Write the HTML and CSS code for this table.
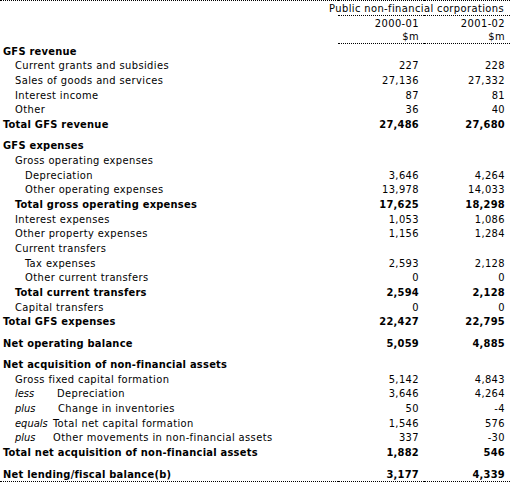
FILE: index.html
```html
<!DOCTYPE html>
<html lang="en">
<head>
    <meta charset="UTF-8">
    <title>GFS - Public non-financial corporations</title>
    <link rel="stylesheet" href="styles.css">
</head>
<body>
    <table class="gfs">
        <colgroup>
            <col class="c-label">
            <col class="c-num">
            <col class="c-num">
        </colgroup>
        <thead>
            <tr class="h1">
                <th></th>
                <th class="num under" colspan="2"><div class="span-head">Public non-financial corporations</div></th>
            </tr>
            <tr class="h2">
                <th></th>
                <th class="num">2000-01</th>
                <th class="num">2001-02</th>
            </tr>
            <tr class="h3">
                <th></th>
                <th class="num under">$m</th>
                <th class="num under">$m</th>
            </tr>
        </thead>
        <tbody>
            <tr class="b"><td>GFS revenue</td><td></td><td></td></tr>
            <tr><td class="l1">Current grants and subsidies</td><td class="num">227</td><td class="num">228</td></tr>
            <tr><td class="l1">Sales of goods and services</td><td class="num">27,136</td><td class="num">27,332</td></tr>
            <tr><td class="l1">Interest income</td><td class="num">87</td><td class="num">81</td></tr>
            <tr><td class="l1">Other</td><td class="num">36</td><td class="num">40</td></tr>
            <tr class="b"><td>Total GFS revenue</td><td class="num">27,486</td><td class="num">27,680</td></tr>
            <tr class="gap"><td colspan="3"></td></tr>

            <tr class="b"><td>GFS expenses</td><td></td><td></td></tr>
            <tr><td class="l1">Gross operating expenses</td><td></td><td></td></tr>
            <tr><td class="l2">Depreciation</td><td class="num">3,646</td><td class="num">4,264</td></tr>
            <tr><td class="l2">Other operating expenses</td><td class="num">13,978</td><td class="num">14,033</td></tr>
            <tr class="b"><td class="l1">Total gross operating expenses</td><td class="num">17,625</td><td class="num">18,298</td></tr>
            <tr><td class="l1">Interest expenses</td><td class="num">1,053</td><td class="num">1,086</td></tr>
            <tr><td class="l1">Other property expenses</td><td class="num">1,156</td><td class="num">1,284</td></tr>
            <tr><td class="l1">Current transfers</td><td></td><td></td></tr>
            <tr><td class="l2">Tax expenses</td><td class="num">2,593</td><td class="num">2,128</td></tr>
            <tr><td class="l2">Other current transfers</td><td class="num">0</td><td class="num">0</td></tr>
            <tr class="b"><td class="l1">Total current transfers</td><td class="num">2,594</td><td class="num">2,128</td></tr>
            <tr><td class="l1">Capital transfers</td><td class="num">0</td><td class="num">0</td></tr>
            <tr class="b"><td>Total GFS expenses</td><td class="num">22,427</td><td class="num">22,795</td></tr>
            <tr class="gap"><td colspan="3"></td></tr>

            <tr class="b"><td>Net operating balance</td><td class="num">5,059</td><td class="num">4,885</td></tr>
            <tr class="gap"><td colspan="3"></td></tr>

            <tr class="b"><td>Net acquisition of non-financial assets</td><td></td><td></td></tr>
            <tr><td class="l1">Gross fixed capital formation</td><td class="num">5,142</td><td class="num">4,843</td></tr>
            <tr><td class="l1"><span class="op w42">less</span>Depreciation</td><td class="num">3,646</td><td class="num">4,264</td></tr>
            <tr><td class="l1"><span class="op w43">plus</span>Change in inventories</td><td class="num">50</td><td class="num">-4</td></tr>
            <tr><td class="l1"><span class="op w35">equals</span>Total net capital formation</td><td class="num">1,546</td><td class="num">576</td></tr>
            <tr><td class="l1"><span class="op w38">plus</span>Other movements in non-financial assets</td><td class="num">337</td><td class="num">-30</td></tr>
            <tr class="b"><td>Total net acquisition of non-financial assets</td><td class="num">1,882</td><td class="num">546</td></tr>
            <tr class="gap last-gap"><td colspan="3"></td></tr>

            <tr class="b end"><td>Net lending/fiscal balance(b)</td><td class="num">3,177</td><td class="num">4,339</td></tr>
        </tbody>
    </table>
</body>
</html>
```

FILE: styles.css
```css
body {
    margin: 0;
    padding: 0;
    background: #fff;
    color: #000;
    font-family: "DejaVu Sans Condensed", "DejaVu Sans", sans-serif;
    font-size: 11px;
}
.gfs {
    width: 510px;
    border-collapse: collapse;
    table-layout: fixed;
    border-top: 1px dotted #000;
}
.c-label {
    width: 338px;
}
.c-num {
    width: 86px;
}
.gfs th,
.gfs td {
    padding: 1px 5px 0 3px;
    font-weight: normal;
    text-align: left;
    white-space: nowrap;
    vertical-align: middle;
    line-height: 12px;
    letter-spacing: 0.4px;
}
.gfs tbody td {
    padding-top: 2px;
}
.gfs .num {
    text-align: right;
}
.span-head {
    display: flex;
    justify-content: flex-end;
    margin-right: 1px;
}
.h1 th {
    height: 13px;
}
.h2 th {
    height: 13px;
}
.h3 th {
    height: 12px;
}
.gfs .under {
    border-bottom: 1px dotted #000;
}
.gfs tbody tr {
    height: 14.67px;
}
.gfs tbody tr.gap {
    height: 6.67px;
}
.gfs tbody tr.last-gap {
    height: 7.6px;
}
.gfs tr.gap td {
    padding: 0;
    line-height: 0;
}
.gfs .b td {
    font-weight: bold;
    letter-spacing: 0.25px;
}
.gfs .l1 {
    padding-left: 15px;
}
.gfs .l2 {
    padding-left: 25px;
}
.op {
    display: inline-block;
    font-style: italic;
    letter-spacing: 0;
}
.w35 { width: 38px; }
.w38 { width: 38px; }
.w42 { width: 42px; }
.w43 { width: 43px; }
.end td {
    border-bottom: 1px dotted #000;
}
```
